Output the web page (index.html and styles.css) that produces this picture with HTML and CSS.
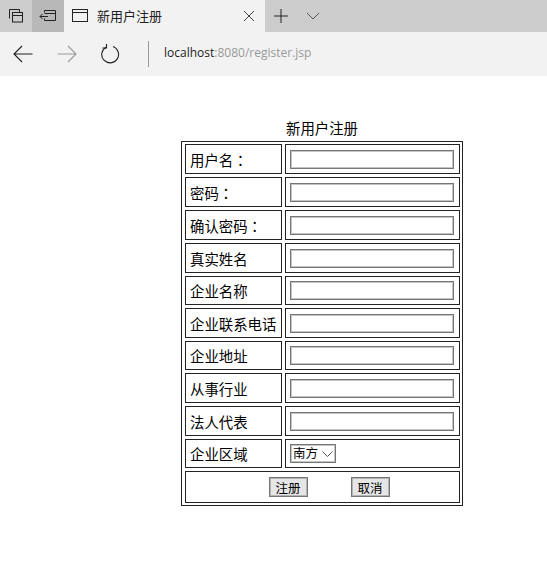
FILE: index.html
```html
<!DOCTYPE html>
<html lang="zh-CN">

<head>
    <meta charset="UTF-8">
    <title>新用户注册</title>
    <link rel="stylesheet" href="styles.css">
</head>

<body>
    <div class="tabbar">
        <div class="tab-btn">
            <svg width="16" height="16" viewBox="0 0 16 16" fill="none" stroke="#222" stroke-width="1">
                <path d="M1.5 10.5V1.5H11.5V4.5"></path>
                <rect x="4.5" y="4.5" width="10" height="9.5"></rect>
                <path d="M4.5 7.5H14.5"></path>
            </svg>
        </div>
        <div class="tab-btn tab-btn-active">
            <svg width="18" height="16" viewBox="0 0 18 16" fill="none" stroke="#222" stroke-width="1">
                <path d="M5.5 4.5V2.5H16.5V12.5H5.5V10.5"></path>
                <path d="M5.5 5.5H16.5"></path>
                <path d="M1 8.5H9M3.5 6L1 8.5L3.5 11"></path>
            </svg>
        </div>
        <div class="tab">
            <svg class="tab-icon" width="16" height="14" viewBox="0 0 16 14" fill="none" stroke="#222" stroke-width="1">
                <rect x="0.5" y="0.5" width="15" height="12"></rect>
                <path d="M0.5 3.5H15.5"></path>
            </svg>
            <span class="tab-title">新用户注册</span>
            <svg class="tab-close" width="12" height="12" viewBox="0 0 12 12" fill="none" stroke="#444" stroke-width="1">
                <path d="M1 1L11 11M11 1L1 11"></path>
            </svg>
        </div>
        <div class="tab-new">
            <svg width="14" height="14" viewBox="0 0 14 14" fill="none" stroke="#222" stroke-width="1">
                <path d="M7 0V14M0 7H14"></path>
            </svg>
        </div>
        <div class="tab-menu">
            <svg width="14" height="8" viewBox="0 0 14 8" fill="none" stroke="#555" stroke-width="1">
                <path d="M1 1L7 7L13 1"></path>
            </svg>
        </div>
    </div>

    <div class="navbar">
        <svg class="nav-back" width="20" height="18" viewBox="0 0 20 18" fill="none" stroke="#222" stroke-width="1.1">
            <path d="M0.8 9H19.5M9 1L1 9L9 17"></path>
        </svg>
        <svg class="nav-forward" width="20" height="18" viewBox="0 0 20 18" fill="none" stroke="#999" stroke-width="1.1">
            <path d="M0.5 9H19.2M11 1L19 9L11 17"></path>
        </svg>
        <svg class="nav-refresh" width="20" height="20" viewBox="0 0 20 20" fill="none" stroke="#222" stroke-width="1.1">
            <path d="M6 3.2A8.4 8.4 0 1 0 13 2.6"></path>
            <path d="M6.5 0V4H2.5"></path>
        </svg>
        <div class="nav-divider"></div>
        <div class="address"><span class="host">localhost</span>:8080/register.jsp</div>
    </div>

    <main class="page">
        <div class="form-title">新用户注册</div>
        <div class="table-frame">
            <table class="register-table">
                <tr>
                    <td class="label">用户名<span class="colon" lang="zh-Hant">：</span></td>
                    <td><input type="text"></td>
                </tr>
                <tr>
                    <td class="label">密码<span class="colon" lang="zh-Hant">：</span></td>
                    <td><input type="text"></td>
                </tr>
                <tr>
                    <td class="label">确认密码<span class="colon" lang="zh-Hant">：</span></td>
                    <td><input type="text"></td>
                </tr>
                <tr>
                    <td class="label">真实姓名</td>
                    <td><input type="text"></td>
                </tr>
                <tr class="short-row">
                    <td class="label">企业名称</td>
                    <td><input type="text"></td>
                </tr>
                <tr>
                    <td class="label">企业联系电话</td>
                    <td><input type="text"></td>
                </tr>
                <tr class="short-row">
                    <td class="label">企业地址</td>
                    <td><input type="text"></td>
                </tr>
                <tr>
                    <td class="label">从事行业</td>
                    <td><input type="text"></td>
                </tr>
                <tr>
                    <td class="label">法人代表</td>
                    <td><input type="text"></td>
                </tr>
                <tr class="short-row">
                    <td class="label">企业区域</td>
                    <td>
                        <div class="select-box">南方
                            <svg width="11" height="6" viewBox="0 0 11 6" fill="none" stroke="#555" stroke-width="1">
                                <path d="M0.5 0.5L5.5 5.5L10.5 0.5"></path>
                            </svg>
                        </div>
                    </td>
                </tr>
                <tr class="actions-row">
                    <td colspan="2">
                        <div class="actions">
                            <button type="button">注册</button>
                            <button type="button">取消</button>
                        </div>
                    </td>
                </tr>
            </table>
        </div>
    </main>
</body>

</html>
```

FILE: styles.css
```css
* {
    box-sizing: border-box;
}

html,
body {
    height: 100%;
    overflow: hidden;
}

body {
    margin: 0;
    background-color: #fff;
    color: #000;
    font-family: "Noto Sans CJK SC", "Noto Sans", sans-serif;
}

.tabbar {
    display: flex;
    height: 32px;
    background-color: #ccc;
}

.tab-btn {
    width: 32px;
    display: flex;
    align-items: center;
    justify-content: center;
}

.tab-btn-active {
    background-color: #b8b8b8;
}

.tab {
    width: 201px;
    display: flex;
    align-items: center;
    background-color: #f2f2f2;
    padding: 0 5px 1px 8px;
}

.tab-title {
    margin-left: 9px;
    font-size: 13px;
    color: #222;
}

.tab-close {
    margin-left: auto;
    margin-right: 5px;
}

.tab-new {
    width: 32px;
    display: flex;
    align-items: center;
    justify-content: center;
}

.tab-menu {
    width: 32px;
    display: flex;
    align-items: center;
    justify-content: center;
}

.navbar {
    height: 44px;
    display: flex;
    align-items: center;
    background-color: #f2f2f2;
}

.nav-back {
    margin-left: 13px;
}

.nav-forward {
    margin-left: 24px;
}

.nav-refresh {
    margin-left: 23px;
}

.nav-divider {
    width: 1px;
    height: 26px;
    background-color: #999;
    margin-left: 28px;
}

.address {
    margin-left: 15px;
    margin-bottom: 4px;
    font-family: "Open Sans", sans-serif;
    font-size: 12px;
    color: #999;
}

.host {
    color: #222;
}

.page {
    padding: 42px 0 0 181px;
    font-size: 14.4px;
}

.form-title {
    width: 282px;
    line-height: 20px;
    padding-bottom: 3px;
    text-align: center;
}

.table-frame {
    width: 282px;
    border: 1px solid #222;
}

/* pulled over the frame so the first and last rows sit 2px from it */
.register-table {
    width: 281px;
    margin: -1px 0;
    border-spacing: 3px;
    font-size: 14.4px;
}

td {
    height: 30px;
    border: 1px solid #222;
    padding: 0 4px;
    white-space: nowrap;
}

.short-row td {
    height: 29px;
}

.actions-row td {
    height: 32px;
}

.label {
    width: 97px;
}

.colon {
    font-family: "Noto Sans CJK TC", sans-serif;
}

input {
    display: block;
    width: 164px;
    height: 19px;
    border: 1px solid #767676;
    box-shadow: inset 0 0 0 1px #c4c4c4;
    padding: 0;
    background-color: #fff;
}

.select-box {
    width: 46px;
    height: 19px;
    border: 1px solid #767676;
    box-shadow: inset 0 0 0 1px #c4c4c4;
    display: flex;
    align-items: center;
    justify-content: space-between;
    padding: 0 2px 0 2px;
    font-size: 12.5px;
    line-height: 1;
}

.actions {
    display: flex;
    justify-content: center;
    gap: 43px;
    padding-left: 13px;
}

button {
    width: 39px;
    height: 20px;
    border: 1px solid #767676;
    box-shadow: inset 0 0 0 1px #b4b4b4;
    padding: 0;
    background-color: #e6e6e6;
    color: #000;
    font-family: inherit;
    font-size: 12.5px;
}
```
